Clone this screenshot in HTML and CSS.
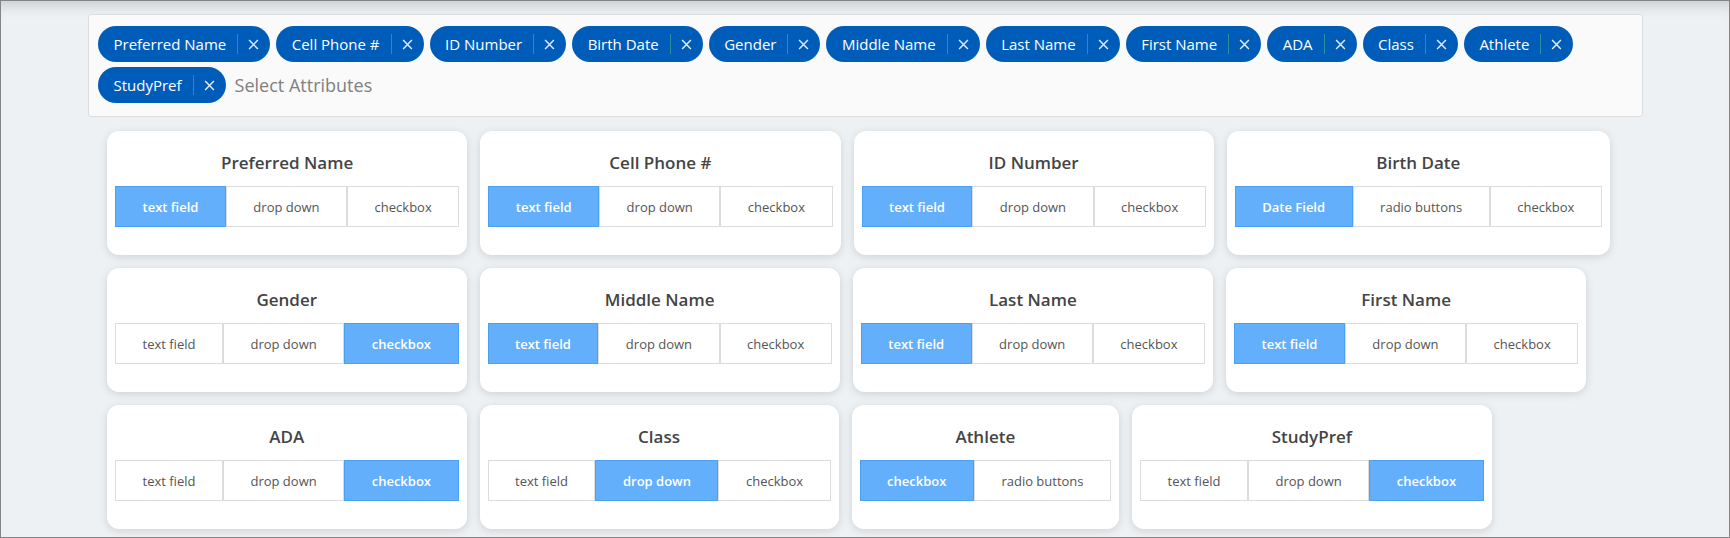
FILE: index.html
```html
<!DOCTYPE html>
<html>
<head>
<meta charset="utf-8">
<link rel="stylesheet" href="styles.css">
</head>
<body>
<div class="page">
  <div class="attr-box">
    <span class="chip"><span class="chip-label">Preferred Name</span><span class="chip-sep"></span><svg class="chip-x" viewBox="0 0 10 10"><path d="M1 1L9 9M9 1L1 9"/></svg></span>
    <span class="chip"><span class="chip-label">Cell Phone #</span><span class="chip-sep"></span><svg class="chip-x" viewBox="0 0 10 10"><path d="M1 1L9 9M9 1L1 9"/></svg></span>
    <span class="chip"><span class="chip-label">ID Number</span><span class="chip-sep"></span><svg class="chip-x" viewBox="0 0 10 10"><path d="M1 1L9 9M9 1L1 9"/></svg></span>
    <span class="chip"><span class="chip-label">Birth Date</span><span class="chip-sep"></span><svg class="chip-x" viewBox="0 0 10 10"><path d="M1 1L9 9M9 1L1 9"/></svg></span>
    <span class="chip"><span class="chip-label">Gender</span><span class="chip-sep"></span><svg class="chip-x" viewBox="0 0 10 10"><path d="M1 1L9 9M9 1L1 9"/></svg></span>
    <span class="chip"><span class="chip-label">Middle Name</span><span class="chip-sep"></span><svg class="chip-x" viewBox="0 0 10 10"><path d="M1 1L9 9M9 1L1 9"/></svg></span>
    <span class="chip"><span class="chip-label">Last Name</span><span class="chip-sep"></span><svg class="chip-x" viewBox="0 0 10 10"><path d="M1 1L9 9M9 1L1 9"/></svg></span>
    <span class="chip"><span class="chip-label">First Name</span><span class="chip-sep"></span><svg class="chip-x" viewBox="0 0 10 10"><path d="M1 1L9 9M9 1L1 9"/></svg></span>
    <span class="chip"><span class="chip-label">ADA</span><span class="chip-sep"></span><svg class="chip-x" viewBox="0 0 10 10"><path d="M1 1L9 9M9 1L1 9"/></svg></span>
    <span class="chip"><span class="chip-label">Class</span><span class="chip-sep"></span><svg class="chip-x" viewBox="0 0 10 10"><path d="M1 1L9 9M9 1L1 9"/></svg></span>
    <span class="chip"><span class="chip-label">Athlete</span><span class="chip-sep"></span><svg class="chip-x" viewBox="0 0 10 10"><path d="M1 1L9 9M9 1L1 9"/></svg></span>
    <span class="chip"><span class="chip-label">StudyPref</span><span class="chip-sep"></span><svg class="chip-x" viewBox="0 0 10 10"><path d="M1 1L9 9M9 1L1 9"/></svg></span>
    <span class="placeholder">Select Attributes</span>
  </div>

  <div class="cards">
    <div class="card"><div class="card-title">Preferred Name</div><div class="opts"><span class="opt active">text field</span><span class="opt">drop down</span><span class="opt">checkbox</span></div></div>
    <div class="card"><div class="card-title">Cell Phone #</div><div class="opts"><span class="opt active">text field</span><span class="opt">drop down</span><span class="opt">checkbox</span></div></div>
    <div class="card"><div class="card-title">ID Number</div><div class="opts"><span class="opt active">text field</span><span class="opt">drop down</span><span class="opt">checkbox</span></div></div>
    <div class="card"><div class="card-title">Birth Date</div><div class="opts"><span class="opt active">Date Field</span><span class="opt">radio buttons</span><span class="opt">checkbox</span></div></div>
    <div class="card"><div class="card-title">Gender</div><div class="opts"><span class="opt">text field</span><span class="opt">drop down</span><span class="opt active">checkbox</span></div></div>
    <div class="card"><div class="card-title">Middle Name</div><div class="opts"><span class="opt active">text field</span><span class="opt">drop down</span><span class="opt">checkbox</span></div></div>
    <div class="card"><div class="card-title">Last Name</div><div class="opts"><span class="opt active">text field</span><span class="opt">drop down</span><span class="opt">checkbox</span></div></div>
    <div class="card"><div class="card-title">First Name</div><div class="opts"><span class="opt active">text field</span><span class="opt">drop down</span><span class="opt">checkbox</span></div></div>
    <div class="card"><div class="card-title">ADA</div><div class="opts"><span class="opt">text field</span><span class="opt">drop down</span><span class="opt active">checkbox</span></div></div>
    <div class="card"><div class="card-title">Class</div><div class="opts"><span class="opt">text field</span><span class="opt active">drop down</span><span class="opt">checkbox</span></div></div>
    <div class="card"><div class="card-title">Athlete</div><div class="opts"><span class="opt active">checkbox</span><span class="opt">radio buttons</span></div></div>
    <div class="card"><div class="card-title">StudyPref</div><div class="opts"><span class="opt">text field</span><span class="opt">drop down</span><span class="opt active">checkbox</span></div></div>
  </div>
</div>
</body>
</html>
```

FILE: styles.css
```css
* { box-sizing: border-box; }
html, body { margin: 0; padding: 0; }
body {
  font-family: "Open Sans", "Lato", sans-serif;
  background: #eef1f4;
}
.page {
  width: 1730px;
  height: 538px;
  border: 1px solid #858585;
  background: #eef1f4;
  box-shadow: inset 0 14px 14px -10px rgba(0, 0, 0, 0.16);
  padding: 13px 0 0 87px;
  overflow: hidden;
}
.attr-box {
  width: 1555px;
  background: #fafafa;
  border: 1px solid #dddddd;
  border-radius: 3px;
  padding: 11px 8px 13px 9px;
  display: flex;
  flex-wrap: wrap;
  align-items: center;
  column-gap: 6px;
  row-gap: 5px;
}
.chip {
  display: inline-flex;
  align-items: center;
  height: 36px;
  border-radius: 18px;
  background: #005cb9;
  color: #ffffff;
  padding: 0 11px 0 15.5px;
  font-size: 15px;
}
.chip-label { line-height: 1; }
.chip-sep {
  width: 1px;
  height: 20px;
  background: #2a8f9c;
  margin: 0 10px 0 11px;
}
.chip-x {
  width: 11px;
  height: 11px;
  fill: none;
  stroke: #e8eef8;
  stroke-width: 1.3;
}
.placeholder {
  font-size: 18px;
  color: #808080;
  margin-left: 3px;
}
.cards {
  display: flex;
  flex-wrap: wrap;
  align-items: flex-start;
  gap: 13px;
  padding: 14px 0 0 19px;
  width: 1560px;
}
.card {
  background: #ffffff;
  border-radius: 12px;
  box-shadow: 0 2px 9px rgba(0, 0, 0, 0.13);
  padding: 20px 8px 28px 8px;
}
.card-title {
  text-align: center;
  font-size: 17px;
  line-height: 24px;
  font-weight: 600;
  color: #444444;
  margin-bottom: 11px;
}
.opts {
  display: flex;
}
.opt {
  height: 41px;
  display: flex;
  align-items: center;
  justify-content: center;
  padding: 0 26.5px;
  border: 1px solid #dcdcdc;
  font-size: 13px;
  color: #555555;
  background: #ffffff;
  white-space: nowrap;
}
.opt.active {
  background: #64affb;
  border-color: #4aa0f2;
  color: #ffffff;
  font-weight: 600;
}
```
